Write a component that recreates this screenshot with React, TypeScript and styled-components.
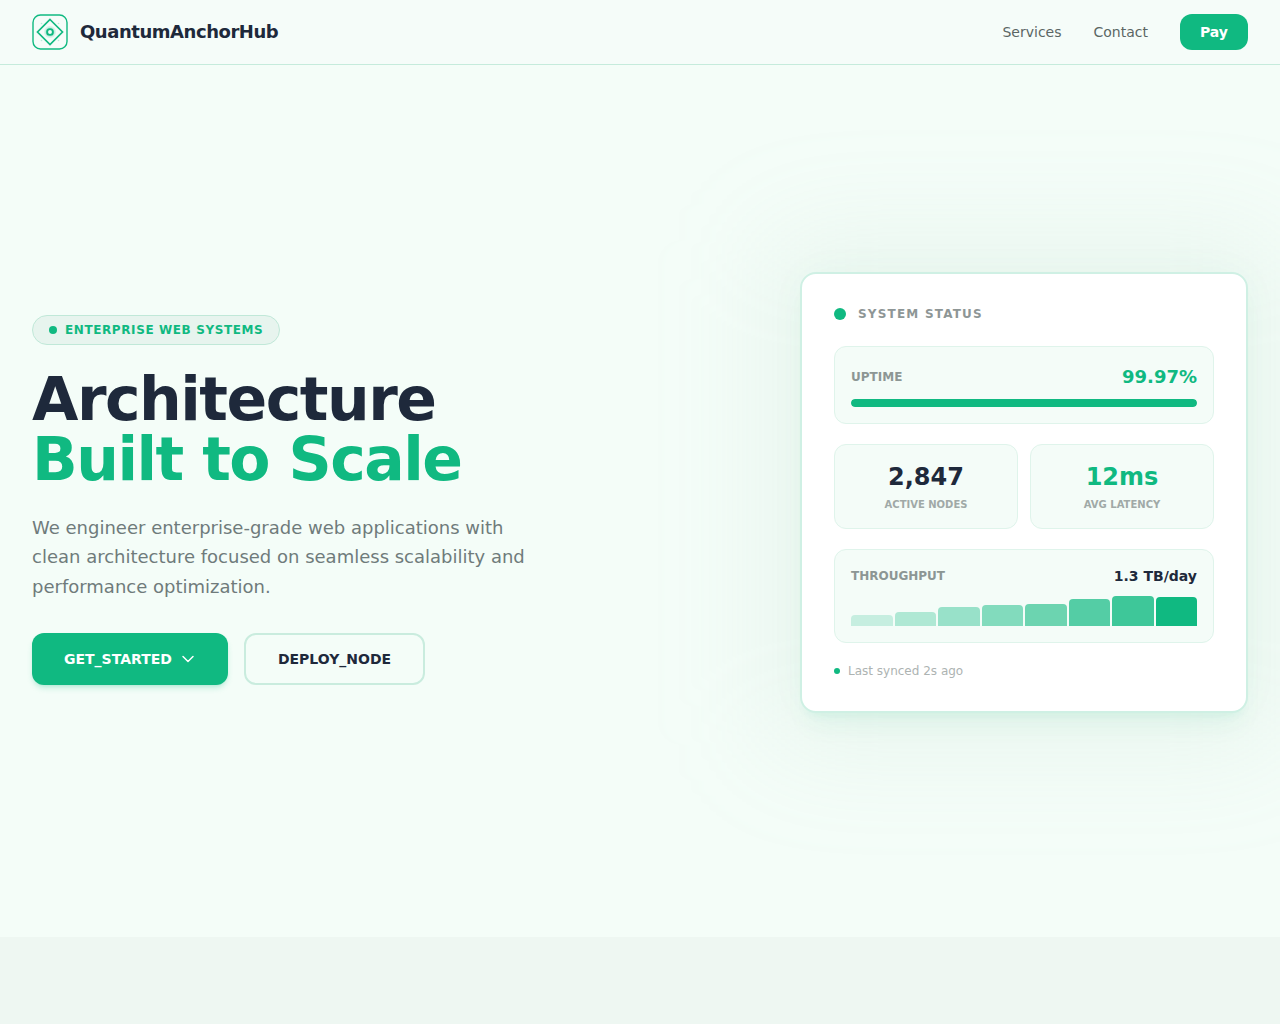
import React from "react";
import styled, { createGlobalStyle } from "styled-components";

const green = "#10b981";
const ink = "#1e293b";

const GlobalStyle = createGlobalStyle`
  *, *::before, *::after { box-sizing: border-box; }
  body {
    margin: 0;
    background: #f4fdf8;
    color: ${ink};
    font-family: "DejaVu Sans", sans-serif;
    font-size: 14px;
    overflow-x: hidden;
  }
  a { color: inherit; text-decoration: none; }
  button { font: inherit; cursor: pointer; }
  h1, h2, p { margin: 0; }
`;

const Page = styled.div`
  min-height: 100vh;
  display: flex;
  flex-direction: column;
  overflow: hidden;
`;

const Header = styled.header`
  display: flex;
  align-items: center;
  justify-content: space-between;
  padding: 14px 32px;
  background: #f5fcf9;
  border-bottom: 1px solid #c5ebdc;
`;

const Brand = styled.a`
  display: flex;
  align-items: center;
  gap: 12px;
  font-size: 18px;
  line-height: 28px;
  font-weight: 700;
  letter-spacing: -0.025em;
`;

const Nav = styled.nav`
  display: flex;
  align-items: center;
  gap: 32px;
`;

const NavLink = styled.a`
  color: #5b6664;
`;

const PayButton = styled.button`
  height: 36px;
  padding: 0 20px;
  border: 0;
  border-radius: 12px;
  background: ${green};
  color: #fff;
  font-weight: 700;
`;

const Hero = styled.main`
  min-height: calc(100vh - 152px);
  padding: 0 32px 17px;
  display: grid;
  grid-template-columns: minmax(0, 1fr) minmax(0, 448px);
  align-items: center;
  gap: 64px;
`;

const Intro = styled.section`
  display: flex;
  flex-direction: column;
  align-items: flex-start;
  padding-top: 15px;
`;

const Badge = styled.p`
  display: flex;
  align-items: center;
  gap: 8px;
  height: 30px;
  padding: 0 16px;
  border: 1px solid #c0e8d8;
  border-radius: 15px;
  background: #e7f4ee;
  color: ${green};
  font-size: 12px;
  font-weight: 700;
  letter-spacing: 0.05em;
`;

const Dot = styled.span<{ $size: number }>`
  flex: none;
  width: ${(p) => p.$size}px;
  height: ${(p) => p.$size}px;
  border-radius: 50%;
  background: ${green};
`;

const Title = styled.h1`
  margin-top: 24px;
  font-size: 60px;
  line-height: 60px;
  font-weight: 700;
  letter-spacing: -0.025em;
`;

const TitleAccent = styled.span`
  display: block;
  color: ${green};
`;

const Lead = styled.p`
  max-width: 512px;
  margin-top: 24px;
  color: #6f7b7b;
  font-size: 18px;
  line-height: 1.625;
`;

const Actions = styled.div`
  display: flex;
  gap: 16px;
  margin-top: 32px;
`;

const ActionButton = styled.button<{ $primary?: boolean }>`
  display: flex;
  align-items: center;
  gap: 8px;
  height: 52px;
  padding: 0 32px;
  border: ${(p) => (p.$primary ? "0" : "2px solid #c9ecde")};
  border-radius: 12px;
  background: ${(p) => (p.$primary ? green : "transparent")};
  color: ${(p) => (p.$primary ? "#fff" : ink)};
  box-shadow: ${(p) => (p.$primary ? "0 4px 6px -1px rgba(16, 185, 129, 0.2), 0 2px 4px -2px rgba(16, 185, 129, 0.2)" : "none")};
  font-weight: 700;
`;

const CardArea = styled.div`
  position: relative;
`;

const Glow = styled.div`
  position: absolute;
  inset: -32px;
  border-radius: 24px;
  background: rgba(165, 190, 180, 0.13);
  filter: blur(56px);
`;

const StatusCard = styled.section`
  position: relative;
  display: flex;
  flex-direction: column;
  gap: 20px;
  padding: 32px;
  border: 2px solid #cff0e4;
  border-radius: 16px;
  background: #fff;
  box-shadow: 0 20px 25px -5px rgba(16, 185, 129, 0.04), 0 8px 10px -6px rgba(16, 185, 129, 0.08), 0 0 40px rgba(16, 185, 129, 0.03);
`;

const CardHeading = styled.h2`
  display: flex;
  align-items: center;
  gap: 12px;
  margin-bottom: 4px;
  color: #8e9696;
  font-size: 12px;
  line-height: 16px;
  font-weight: 700;
  letter-spacing: 0.1em;
`;

const Panel = styled.div`
  padding: 16px;
  border: 1px solid #dff4eb;
  border-radius: 12px;
  background: #f4fcf8;
`;

const PanelRow = styled.div`
  display: flex;
  align-items: center;
  justify-content: space-between;
`;

const PanelLabel = styled.span`
  color: #8c9694;
  font-size: 12px;
  line-height: 16px;
  font-weight: 700;
`;

const PanelValue = styled.strong<{ $large?: boolean }>`
  color: ${(p) => (p.$large ? green : ink)};
  font-size: ${(p) => (p.$large ? 18 : 14)}px;
  line-height: ${(p) => (p.$large ? 28 : 20)}px;
`;

const UptimeTrack = styled.div`
  height: 8px;
  margin-top: 8px;
  border-radius: 4px;
  background: #d5f1e6;
  overflow: hidden;
`;

const UptimeFill = styled.div`
  height: 100%;
  border-radius: 4px;
  background: ${green};
`;

const StatGrid = styled.div`
  display: grid;
  grid-template-columns: 1fr 1fr;
  gap: 12px;
`;

const Stat = styled(Panel)`
  display: flex;
  flex-direction: column;
  align-items: center;
  gap: 4px;
`;

const StatValue = styled.strong<{ $accent?: boolean }>`
  color: ${(p) => (p.$accent ? green : ink)};
  font-size: 24px;
  line-height: 32px;
`;

const StatLabel = styled.span`
  color: #a0a9a7;
  font-size: 10px;
  line-height: 15px;
  font-weight: 700;
`;

const Bars = styled.div`
  display: flex;
  align-items: flex-end;
  gap: 2px;
  height: 32px;
  margin-top: 8px;
`;

const Bar = styled.div`
  flex: 1;
  border-radius: 4px 4px 0 0;
  background: ${green};
`;

const Synced = styled.p`
  display: flex;
  align-items: center;
  gap: 8px;
  color: #adb3b2;
  font-size: 12px;
  line-height: 16px;
`;

const NextSection = styled.section`
  flex: 1;
  background: #eef7f2;
`;

const bars = [
  { height: 11, opacity: 0.2 },
  { height: 14, opacity: 0.3 },
  { height: 19, opacity: 0.4 },
  { height: 21, opacity: 0.5 },
  { height: 22, opacity: 0.6 },
  { height: 27, opacity: 0.7 },
  { height: 30, opacity: 0.8 },
  { height: 29, opacity: 1 },
];

function Logo() {
  return (
    <svg width="36" height="36" viewBox="0 0 36 36" fill="none" stroke={green} aria-hidden="true">
      <rect x="1" y="1" width="34" height="34" rx="7.5" strokeWidth="1.4" />
      <path d="M18 5.5 30.5 18 18 30.5 5.5 18Z" strokeWidth="1.7" />
      <circle cx="18" cy="18" r="6" fill={green} fillOpacity="0.12" stroke="none" />
      <circle cx="18" cy="18" r="4.6" fill={green} fillOpacity="0.2" stroke="none" />
      <circle cx="18" cy="18" r="2.9" fill="#f5fcf9" strokeWidth="1.9" />
      <g fill={green} fillOpacity="0.25" stroke="none">
        <circle cx="9.5" cy="9.5" r="0.8" />
        <circle cx="26.5" cy="9.5" r="0.8" />
        <circle cx="9.5" cy="26.5" r="0.8" />
        <circle cx="26.5" cy="26.5" r="0.8" />
      </g>
    </svg>
  );
}

function ChevronDown() {
  return (
    <svg width="16" height="16" viewBox="0 0 16 16" fill="none" stroke="currentColor" strokeWidth="1.5" strokeLinecap="round" strokeLinejoin="round" aria-hidden="true">
      <path d="m3 5.5 5 5 5-5" />
    </svg>
  );
}

export default function App() {
  return (
    <Page>
      <GlobalStyle />
      <Header>
        <Brand href="#home"><Logo />QuantumAnchorHub</Brand>
        <Nav>
          <NavLink href="#services">Services</NavLink>
          <NavLink href="#contact">Contact</NavLink>
          <PayButton type="button">Pay</PayButton>
        </Nav>
      </Header>
      <Hero>
        <Intro>
          <Badge><Dot $size={8} />ENTERPRISE WEB SYSTEMS</Badge>
          <Title>Architecture<TitleAccent>Built to Scale</TitleAccent></Title>
          <Lead>We engineer enterprise-grade web applications with clean architecture focused on seamless scalability and performance optimization.</Lead>
          <Actions>
            <ActionButton type="button" $primary>GET_STARTED<ChevronDown /></ActionButton>
            <ActionButton type="button">DEPLOY_NODE</ActionButton>
          </Actions>
        </Intro>
        <CardArea>
          <Glow />
          <StatusCard>
            <CardHeading><Dot $size={12} />SYSTEM STATUS</CardHeading>
            <Panel>
              <PanelRow><PanelLabel>UPTIME</PanelLabel><PanelValue $large>99.97%</PanelValue></PanelRow>
              <UptimeTrack><UptimeFill style={{ width: "99.97%" }} /></UptimeTrack>
            </Panel>
            <StatGrid>
              <Stat><StatValue>2,847</StatValue><StatLabel>ACTIVE NODES</StatLabel></Stat>
              <Stat><StatValue $accent>12ms</StatValue><StatLabel>AVG LATENCY</StatLabel></Stat>
            </StatGrid>
            <Panel>
              <PanelRow><PanelLabel>THROUGHPUT</PanelLabel><PanelValue>1.3 TB/day</PanelValue></PanelRow>
              <Bars>
                {bars.map((bar, index) => <Bar key={index} style={{ height: bar.height, opacity: bar.opacity }} />)}
              </Bars>
            </Panel>
            <Synced><Dot $size={6} />Last synced 2s ago</Synced>
          </StatusCard>
        </CardArea>
      </Hero>
      <NextSection aria-label="Services" />
    </Page>
  );
}
